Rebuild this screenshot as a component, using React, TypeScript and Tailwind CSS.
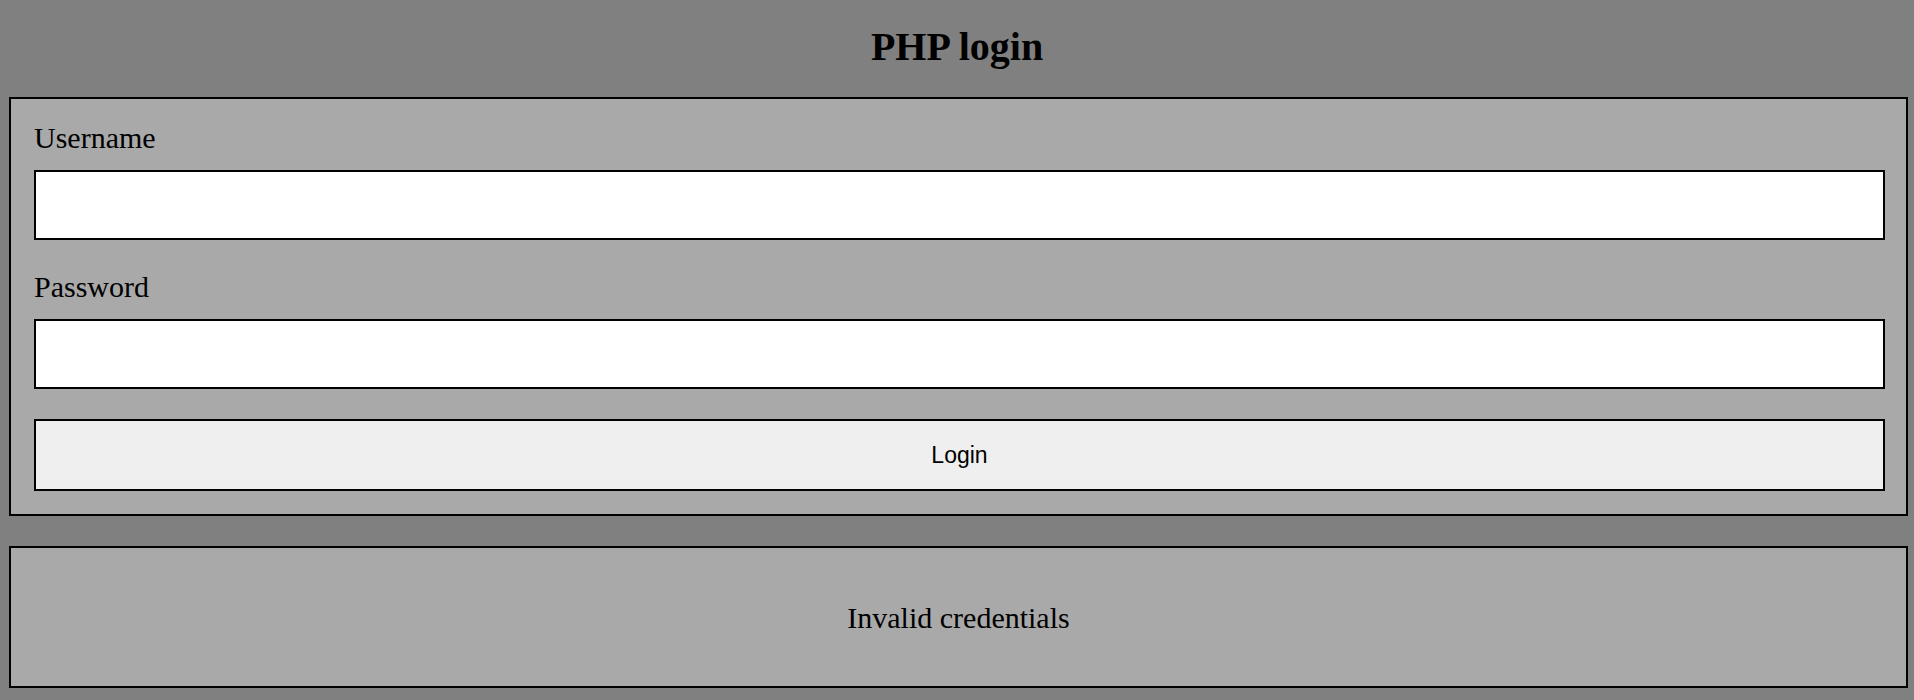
export default function App() {
  return (
    <div className="min-h-[700px] bg-[#808080] pt-[24px] pb-[12px] font-['Liberation_Serif','Times_New_Roman',serif] text-black">
      <h1 className="text-center text-[40px] leading-[46px] font-bold">PHP login</h1>

      {/* Login form */}
      <form
        className="ml-[9px] mr-[6px] mt-[27px] border-2 border-black bg-[#a9a9a9] pl-[23px] pr-[21px] pt-[22px] pb-[23px]"
        onSubmit={(e) => e.preventDefault()}
      >
        <label htmlFor="username" className="block text-[30px] leading-[33px]">
          Username
        </label>
        <input
          id="username"
          type="text"
          className="mt-[16px] block h-[70px] w-full border-2 border-black bg-white px-2 text-[24px] outline-none"
        />
        <label htmlFor="password" className="mt-[30px] block text-[30px] leading-[33px]">
          Password
        </label>
        <input
          id="password"
          type="password"
          className="mt-[16px] block h-[70px] w-full border-2 border-black bg-white px-2 text-[24px] outline-none"
        />
        <button
          type="submit"
          className="mt-[30px] block h-[72px] w-full border-2 border-black bg-[#efefef] font-['Liberation_Sans',Arial,sans-serif] text-[23px]"
        >
          Login
        </button>
      </form>

      {/* Message box */}
      <div className="ml-[9px] mr-[6px] mt-[30px] flex h-[142px] items-center justify-center border-2 border-black bg-[#a9a9a9]">
        <p className="text-[30px] leading-[33px]">Invalid credentials</p>
      </div>
    </div>
  );
}
